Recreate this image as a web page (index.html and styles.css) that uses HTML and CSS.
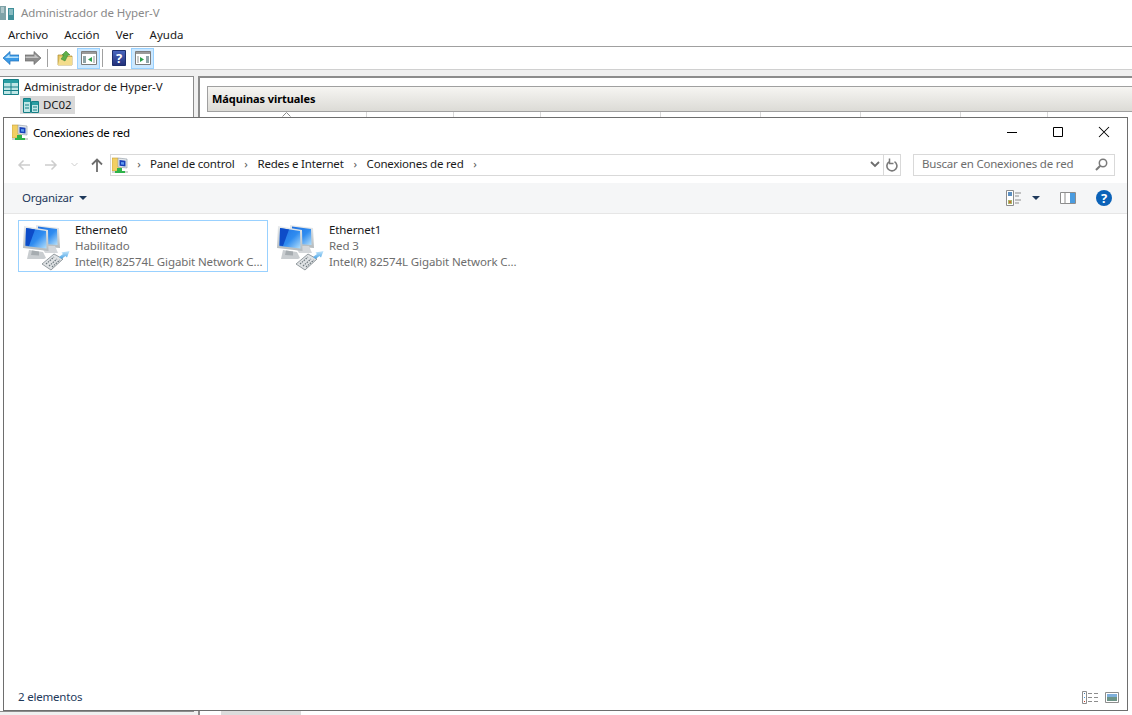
FILE: index.html
```html
<!DOCTYPE html>
<html lang="es">
<head>
	<meta charset="utf-8">
	<title>Conexiones de red</title>
	<link rel="stylesheet" href="styles.css">
</head>
<body>
	<!-- shared icons -->
	<svg class="defs" width="0" height="0">
		<defs>
			<linearGradient id="screenBlue" x1="0" y1="0" x2="1" y2="1">
				<stop offset="0" stop-color="#1f6fe0"/>
				<stop offset="0.55" stop-color="#2f8cf0"/>
				<stop offset="1" stop-color="#b5e0fb"/>
			</linearGradient>
			<linearGradient id="bezel" x1="0" y1="0" x2="0" y2="1">
				<stop offset="0" stop-color="#e8ebed"/>
				<stop offset="1" stop-color="#b4babd"/>
			</linearGradient>
			<linearGradient id="arrowBlue" x1="0" y1="0" x2="0" y2="1">
				<stop offset="0" stop-color="#c4e6fc"/>
				<stop offset="1" stop-color="#4aa3e4"/>
			</linearGradient>
			<linearGradient id="helpBlue" x1="0" y1="0" x2="0" y2="1">
				<stop offset="0" stop-color="#4a68c0"/>
				<stop offset="1" stop-color="#232f78"/>
			</linearGradient>
			<symbol id="netBig" viewBox="0 0 60 54">
				<path d="M21 6l23 3 1 20-24-2z" fill="url(#bezel)"/>
				<path d="M23 7.500l19 2.500 .5 16-19.500-1.500z" fill="url(#screenBlue)"/>
				<path d="M26 27h14l3 7H30z" fill="#d4d7da"/>
				<path d="M9 7l24 4 .5 21L8 29z" fill="url(#bezel)"/>
				<path d="M11 9l20 3 .5 17.500L10.500 27z" fill="url(#screenBlue)"/>
				<path d="M11 9l9 1.500-6 16.500-3.500-.5z" fill="#0d4cc8"/>
				<path d="M14 31l14 2 3 6-2 1H12z" fill="#c9cdd0"/>
				<path d="M17 31.500l7 1v4l-8-.5z" fill="#a6acb0"/>
				<path d="M27 45l12-10 9 5-12 11z" fill="#dfe2e4" stroke="#7d868b" stroke-width=".8"/>
				<path d="M31 45l8-7M34 47l8-7M37 48l8-7" stroke="#6f7a80" stroke-width="1.200" stroke-dasharray="1.500 1"/>
				<path d="M44 38l4-3-1.500-1.500 8-1.500-2.500 6.500-1.500-1.500-4 3z" fill="url(#arrowBlue)"/>
			</symbol>
			<symbol id="netSmall" viewBox="0 0 16 16">
				<path d="M0 1h6l1 1h2v12H0z" fill="#f2cf63" stroke="#c49b35" stroke-width=".6"/>
				<path d="M6 1l9 1v9l-9-1z" fill="#e4e8ec" stroke="#8c97a3" stroke-width=".6"/>
				<path d="M7.500 3l6 .7v5.800l-6-.7z" fill="#1740b8"/>
				<path d="M9 5l3 .3v2.500L9 7.500z" fill="#5f9af0"/>
				<path d="M0 14h16v2H0z" fill="#cfd3cf"/>
				<path d="M5 11h5v3h3v2H3v-2h2z" fill="#2fb34a"/>
			</symbol>
			<symbol id="tableIcon" viewBox="0 0 16 16">
				<path d="M.5 .5h15v15H.5z" fill="#bfe6e6" stroke="#157f86"/>
				<path d="M1 1h14v3H1z" fill="#2a9ea3"/>
				<path d="M8 4v11M1 8h14M1 11.500h14" stroke="#157f86"/>
			</symbol>
			<symbol id="serverIcon" viewBox="0 0 16 16">
				<path d="M.5 1.500h7v14h-7z" fill="#bfe6e6" stroke="#157f86"/>
				<path d="M8.500 4.500h7v11h-7z" fill="#bfe6e6" stroke="#157f86"/>
				<path d="M1 2h6v3H1zM9 5h6v3H9z" fill="#2a9ea3"/>
				<path d="M2 8h4M2 11h4M10 10h4M10 13h4" stroke="#157f86"/>
			</symbol>
		</defs>
	</svg>

	<div class="hyperv">
		<div class="hv-title">
			<svg class="hv-logo" width="16" height="16" viewBox="0 0 16 16"><path d="M0 1h6v14H0z" fill="#7fa3a8"/><path d="M1 3h3M1 5h3M1 7h3" stroke="#dfeaec"/><path d="M8 3h6v12H8z" fill="#3f8f99"/><path d="M9 5h4M9 7h4M9 9h4" stroke="#cfe5e8"/></svg>
			<span>Administrador de Hyper-V</span>
		</div>
		<div class="hv-menu">
			<span>Archivo</span>
			<span>Acción</span>
			<span>Ver</span>
			<span>Ayuda</span>
		</div>
		<div class="hv-tools">
			<svg width="16" height="14" viewBox="0 0 16 14"><path d="M0 7l7-6.500v3.500h9v6H7v3.500z" fill="#3b9ae6" stroke="#1c6fb8" stroke-width=".7"/><path d="M2 7l4.500-4v2.500h9v1.500z" fill="#b5e0fb"/></svg>
			<svg class="tool-gap" width="16" height="14" viewBox="0 0 16 14"><path d="M16 7L9 .5V4H0v6h9v3.500z" fill="#8d8d8d" stroke="#6c6c6c" stroke-width=".7"/><path d="M14 7L9.500 3v2.500H.5V7z" fill="#c4c4c4"/></svg>
			<i class="tool-sep"></i>
			<svg width="16" height="16" viewBox="0 0 16 16"><path d="M1 5h5l1 1h8v9H1z" fill="#e7c766" stroke="#a98a2e" stroke-width=".7"/><path d="M3 7h12v8H1z" fill="#f3dc8c"/><path d="M4 9l3-4H5l4-4 4 4h-2L8 11z" fill="#5fb04b" stroke="#34812a" stroke-width=".5"/></svg>
			<span class="tool-on">
				<svg width="16" height="14" viewBox="0 0 16 14"><path d="M.5 .5h15v13H.5z" fill="#fff" stroke="#7d7d7d"/><path d="M1 1h14v2H1z" fill="#9b9b9b"/><path d="M2 5h3v7H2z" fill="#8fa4a8"/><path d="M11 6v5L7 8.500z" fill="#2ba14a"/><path d="M12 5h2v7h-2z" fill="#c9c9c9"/></svg>
			</span>
			<i class="tool-sep tool-sep-near"></i>
			<svg class="tool-help" width="14" height="16" viewBox="0 0 14 16"><path d="M.5 .5h13v15H.5z" fill="url(#helpBlue)" stroke="#1c2d6c"/><text x="7" y="12.500" class="help-q">?</text></svg>
			<span class="tool-on">
				<svg width="16" height="14" viewBox="0 0 16 14"><path d="M.5 .5h15v13H.5z" fill="#fff" stroke="#7d7d7d"/><path d="M1 1h14v2H1z" fill="#9b9b9b"/><path d="M2 5h2v7H2z" fill="#c9c9c9"/><path d="M5 6v5l4-2.500z" fill="#2ba14a"/><path d="M11 5h3v7h-3z" fill="#8fa4a8"/></svg>
			</span>
		</div>
		<div class="hv-panes">
			<div class="hv-tree">
				<div class="tree-row">
					<svg width="16" height="16"><use href="#tableIcon"/></svg>
					<span>Administrador de Hyper-V</span>
				</div>
				<div class="tree-row tree-child">
					<svg width="16" height="16"><use href="#serverIcon"/></svg>
					<span>DC02</span>
				</div>
			</div>
			<div class="hv-main">
				<div class="vm-panel">
					<div class="vm-head">Máquinas virtuales</div>
					<div class="vm-cols">
						<span class="col-name"><svg width="9" height="5" viewBox="0 0 9 5"><path d="M.5 4.500l4-4 4 4" fill="none" stroke="#8a8a8a"/></svg></span>
						<span class="col-a"></span>
						<span class="col-a"></span>
						<span class="col-b"></span>
						<span class="col-c"></span>
						<span class="col-c"></span>
						<span class="col-c"></span>
						<span class="col-a"></span>
					</div>
				</div>
				<div class="hv-scroll"></div>
			</div>
		</div>
	</div>

	<div class="explorer">
		<div class="ex-title">
			<svg class="ex-icon" width="16" height="16"><use href="#netSmall"/></svg>
			<span class="ex-name">Conexiones de red</span>
			<div class="win-btns">
				<svg width="46" height="28" viewBox="0 1 46 28"><path d="M18 15.500h10" stroke="#000"/></svg>
				<svg width="46" height="28" viewBox="0 1 46 28"><path d="M18.500 10.500h9v9h-9z" fill="none" stroke="#000"/></svg>
				<svg width="46" height="28" viewBox="0 1 46 28"><path d="M18 10l10 10M28 10L18 20" stroke="#000" stroke-width="1.050"/></svg>
			</div>
		</div>
		<div class="ex-nav">
			<div class="nav-arrows">
				<svg width="14" height="12" viewBox="0 0 14 12"><path d="M13 6H2M6.500 1.500L2 6l4.500 4.500" fill="none" stroke="#cdcdcd" stroke-width="1.500"/></svg>
				<svg width="14" height="12" viewBox="0 0 14 12"><path d="M1 6h11M7.500 1.500L12 6l-4.500 4.500" fill="none" stroke="#cdcdcd" stroke-width="1.500"/></svg>
				<svg width="7" height="5" viewBox="0 0 7 5"><path d="M.5 1l3 3 3-3" fill="none" stroke="#cdcdcd"/></svg>
				<svg width="12" height="14" viewBox="0 0 12 14"><path d="M6 14V2M1 6.500L6 1.500l5 5" fill="none" stroke="#6d6d6d" stroke-width="1.800"/></svg>
			</div>
			<div class="address">
				<svg class="addr-icon" width="16" height="16"><use href="#netSmall"/></svg>
				<span class="crumb-sep">›</span>
				<span>Panel de control</span>
				<span class="crumb-sep">›</span>
				<span>Redes e Internet</span>
				<span class="crumb-sep">›</span>
				<span>Conexiones de red</span>
				<span class="crumb-sep">›</span>
				<svg class="addr-drop" width="10" height="7" viewBox="0 0 10 7"><path d="M1 1l4 4 4-4" fill="none" stroke="#6d6d6d" stroke-width="1.800"/></svg>
				<span class="addr-refresh">
					<svg width="12" height="14" viewBox="0 0 12 14"><path d="M8.500 3.600A5 5 0 1 1 3 3.800" fill="none" stroke="#7a7a7a" stroke-width="1.600"/><path d="M3.500 .5v5h4" fill="none" stroke="#7a7a7a" stroke-width="1.500"/></svg>
				</span>
			</div>
			<div class="search">
				<span>Buscar en Conexiones de red</span>
				<svg width="13" height="13" viewBox="0 0 13 13"><circle cx="8" cy="5" r="3.700" fill="none" stroke="#7a7a7a" stroke-width="1.500"/><path d="M5.300 7.700L1 12" stroke="#7a7a7a" stroke-width="2"/></svg>
			</div>
		</div>
		<div class="ex-command">
			<span class="cmd-org">Organizar</span>
			<i class="caret"></i>
			<div class="cmd-right">
				<svg width="16" height="16" viewBox="0 0 16 16"><path d="M.5 .5h7v15h-7z" fill="#fff" stroke="#8d8d8d"/><path d="M2 2h4v4H2z" fill="#5c8fc0"/><path d="M2 10h4v4H2z" fill="#a8b86a"/><path d="M3 11h2v2H3z" fill="#c9693c"/><path d="M9 3h6M9 6h4M9 10h6M9 13h4" stroke="#8d8d8d"/></svg>
				<i class="caret caret-view"></i>
				<svg class="pane-btn" width="16" height="12" viewBox="0 0 16 12"><path d="M.5 .5h15v11H.5z" fill="#fff" stroke="#8d8d8d"/><path d="M5 1v10" stroke="#8d8d8d"/><path d="M10 1h5v10h-5z" fill="#4a9ce0"/></svg>
				<svg class="help-btn" width="16" height="16" viewBox="0 0 16 16"><circle cx="8" cy="8" r="8" fill="#0b62b8"/><text x="8" y="12.500" class="help-round">?</text></svg>
			</div>
		</div>
		<div class="ex-items">
			<div class="item item-on">
				<svg class="item-icon" width="60" height="54"><use href="#netBig"/></svg>
				<div class="item-text">
					<div class="item-name">Ethernet0</div>
					<div>Habilitado</div>
					<div>Intel(R) 82574L Gigabit Network C...</div>
				</div>
			</div>
			<div class="item">
				<svg class="item-icon" width="60" height="54"><use href="#netBig"/></svg>
				<div class="item-text">
					<div class="item-name">Ethernet1</div>
					<div>Red 3</div>
					<div>Intel(R) 82574L Gigabit Network C...</div>
				</div>
			</div>
		</div>
		<div class="ex-status">
			<span class="status-count">2 elementos</span>
			<div class="status-views">
				<svg width="16" height="13" viewBox="0 0 16 13"><path d="M.5 .5h4v12h-4z" fill="#fff" stroke="#8d8d8d"/><path d="M2 2h1v1H2z" fill="#4a7fb0"/><path d="M2 6h1v1H2z" fill="#3c9ae0"/><path d="M2 10h1v1H2z" fill="#c8402a"/><path d="M6 2.500h4M12 2.500h4M6 6.500h4M12 6.500h4M6 10.500h4M12 10.500h4" stroke="#8d8d8d"/></svg>
				<svg width="14" height="11" viewBox="0 0 14 11"><path d="M.5 .5h13v10H.5z" fill="#fff" stroke="#8d8d8d"/><path d="M2 2h10v3H2z" fill="#7fb0dc"/><path d="M2 5h10v4H2z" fill="#6d9488"/></svg>
			</div>
		</div>
	</div>
</body>
</html>
```

FILE: styles.css
```css
* {
	margin: 0;
	padding: 0;
	box-sizing: border-box;
}

html, body {
	height: 100%;
	overflow: hidden;
}

body {
	position: relative;
	background-color: #fff;
	font-family: "Noto Sans", "Open Sans", sans-serif;
	font-size: 11.5px;
	color: #1a1a1a;
}

.defs {
	position: absolute;
}

svg {
	display: block;
	flex: none;
}

/* window behind */
.hyperv {
	height: 715px;
	display: flex;
	flex-direction: column;
	letter-spacing: -.08px;
}

.hv-title {
	height: 23px;
	padding-top: 2px;
	display: flex;
	align-items: center;
	gap: 5px;
	color: #8a8a8a;
}

.hv-menu {
	height: 24px;
	display: flex;
	align-items: center;
	gap: 16px;
	padding-left: 8px;
	border-bottom: 1px solid #a0a0a0;
	letter-spacing: 0;
}

.hv-tools {
	height: 23px;
	display: flex;
	align-items: center;
	padding-left: 3px;
	border-bottom: 1px solid #d0d0d0;
}

.tool-gap {
	margin-left: 6px;
}

.tool-sep {
	width: 1px;
	height: 18px;
	margin: 0 9px 0 6px;
	background-color: #a0a0a0;
}

.tool-sep-near {
	margin-left: 2px;
}

.tool-on {
	width: 23px;
	height: 21px;
	margin-left: 4px;
	display: flex;
	align-items: center;
	justify-content: center;
	background-color: #cce8ff;
	border: 1px solid #99d1ff;
}

.tool-help {
	margin-right: 1px;
}

.help-q {
	font-size: 13px;
	font-weight: 700;
	fill: #fff;
	text-anchor: middle;
}

.hv-panes {
	flex: 1;
	display: flex;
	padding-top: 6px;
	background-color: #f0f0f0;
}

.hv-tree {
	width: 194px;
	margin-bottom: 3px;
	padding-top: 1px;
	background-color: #fff;
	border: 1px solid #8c8c8c;
	border-left: 0;
}

.tree-row {
	height: 18px;
	padding-left: 3px;
	display: flex;
	align-items: center;
	gap: 5px;
}

.tree-row span {
	padding-bottom: 2px;
}

.tree-child {
	width: 55px;
	margin-left: 20px;
	gap: 4px;
	background-color: #d9d9d9;
}

.hv-main {
	flex: 1;
	margin-left: 4px;
	padding: 8px 0 0 7px;
	background-color: #fff;
	border-top: 2px solid #8c8c8c;
	border-left: 2px solid #8c8c8c;
	display: flex;
	flex-direction: column;
}

.vm-panel {
	flex: 1;
}

.vm-head {
	height: 26px;
	padding: 0 0 2px 4px;
	display: flex;
	align-items: center;
	background: linear-gradient(#f6f5f2, #dcdbd6);
	border: 1px solid #a0a0a0;
	border-right: 0;
	font-size: 11px;
	font-weight: 700;
	color: #000;
}

.vm-cols {
	display: flex;
	height: 6px;
}

.vm-cols span {
	border-right: 1px solid #d8d8d8;
}

.col-name {
	width: 160px;
	display: flex;
	justify-content: center;
}

.col-a {
	width: 87px;
}

.col-b {
	width: 120px;
}

.col-c {
	width: 100px;
}

.hv-scroll {
	width: 80px;
	height: 4px;
	margin-left: 14px;
	background-color: #dcdcdc;
}

/* network connections window */
.explorer {
	position: absolute;
	left: 3px;
	top: 117px;
	width: 1125px;
	height: 594px;
	display: flex;
	flex-direction: column;
	background-color: #fff;
	border: 1px solid #6e6e6e;
	letter-spacing: -.2px;
}

.ex-title {
	height: 30px;
	display: flex;
	align-items: center;
	padding: 0 0 2px 8px;
	color: #000;
}

.ex-name {
	margin-left: 5px;
}

.win-btns {
	display: flex;
	margin-left: auto;
}

.ex-nav {
	height: 35px;
	display: flex;
	align-items: center;
	padding-bottom: 2px;
}

.nav-arrows {
	width: 106px;
	padding: 0 7px 0 13px;
	display: flex;
	align-items: center;
	justify-content: space-between;
}

.address {
	width: 791px;
	height: 22px;
	display: flex;
	align-items: center;
	padding-left: 1px;
	border: 1px solid #d9d9d9;
}

.address > span,
.search > span {
	padding-bottom: 2px;
}

.crumb-sep {
	width: 23px;
	text-align: center;
	color: #5a5a5a;
}

.addr-icon + .crumb-sep {
	width: 22px;
}

.addr-drop {
	margin-left: auto;
	margin-right: 3px;
}

.address > .addr-refresh {
	width: 17px;
	height: 100%;
	padding: 0;
	display: flex;
	align-items: center;
	justify-content: center;
	border-left: 1px solid #d9d9d9;
}

.search {
	width: 202px;
	height: 22px;
	margin-left: 12px;
	padding: 0 6px 0 8px;
	display: flex;
	align-items: center;
	justify-content: space-between;
	border: 1px solid #d9d9d9;
	color: #6d6d6d;
}

.ex-command {
	height: 31px;
	display: flex;
	align-items: center;
	padding-left: 18px;
	background-color: #f5f6f7;
	border-bottom: 1px solid #e6e6e6;
	letter-spacing: -.3px;
	color: #1e395b;
}

.cmd-org {
	padding-bottom: 2px;
}

.caret {
	width: 0;
	height: 0;
	margin-left: 6px;
	border-left: 4px solid transparent;
	border-right: 4px solid transparent;
	border-top: 4px solid #1e395b;
}

.cmd-right {
	margin-left: auto;
	padding-right: 15px;
	display: flex;
	align-items: center;
}

.caret-view {
	margin-left: 10px;
}

.pane-btn {
	margin-left: 20px;
}

.help-btn {
	margin-left: 20px;
}

.help-round {
	font-size: 13px;
	font-weight: 700;
	fill: #fff;
	text-anchor: middle;
}

.ex-items {
	flex: 1;
	display: flex;
	align-items: flex-start;
	gap: 4px;
	padding: 6px 0 0 14px;
}

.item {
	width: 250px;
	height: 52px;
	display: flex;
	align-items: center;
	border: 1px solid transparent;
}

.item-on {
	border-color: #99d1ff;
}

.item-icon {
	margin-left: -4px;
}

.item-text {
	line-height: 16px;
	color: #6d6d6d;
	white-space: nowrap;
	letter-spacing: -.11px;
}

.item-name {
	color: #1a1a1a;
}

.ex-status {
	height: 26px;
	display: flex;
	align-items: center;
	padding: 0 8px 0 14px;
	color: #1e395b;
}

.status-count {
	padding-bottom: 2px;
}

.status-views {
	margin-left: auto;
	display: flex;
	align-items: center;
	gap: 7px;
}
```
